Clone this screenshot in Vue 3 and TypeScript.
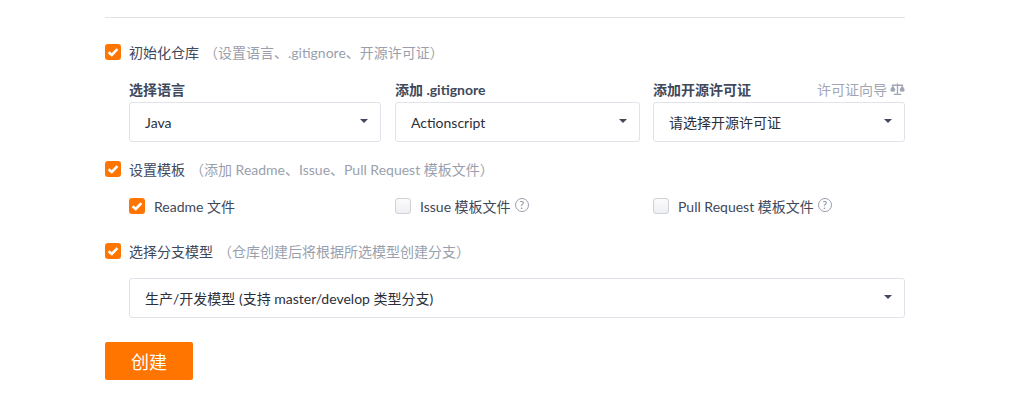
<template>
  <div class="page">
    <hr class="divider" />

    <div class="check-row first">
      <span class="box on"><svg viewBox="0 0 16 16"><path d="M3.6 8.2 6.8 11 12.4 5.2" /></svg></span>
      <span class="title">初始化仓库</span>
      <span class="hint">（设置语言、.gitignore、开源许可证）</span>
    </div>

    <div class="fields">
      <div v-for="f in fields" :key="f.label" class="field" :class="f.cls">
        <div class="field-head">
          <label>{{ f.label }}</label>
          <span v-if="f.wizard" class="wizard">
            许可证向导
            <svg class="scale" viewBox="0 0 16 14">
              <path d="M8 1v11M4 12.800h8M2 3h12" />
              <path class="fill" d="M0.500 7 3 3.200 5.500 7v1.500a2.500 1.500 0 0 1-5 0ZM10.500 7 13 3.200 15.500 7v1.500a2.500 1.500 0 0 1-5 0Z" />
            </svg>
          </span>
        </div>
        <div class="select">{{ f.value }}<i class="caret"></i></div>
      </div>
    </div>

    <div class="check-row second">
      <span class="box on"><svg viewBox="0 0 16 16"><path d="M3.6 8.2 6.8 11 12.4 5.2" /></svg></span>
      <span class="title">设置模板</span>
      <span class="hint">（添加 Readme、Issue、Pull Request 模板文件）</span>
    </div>

    <div class="templates">
      <div v-for="t in templates" :key="t.label" class="tpl" :class="t.cls">
        <span class="box" :class="{ on: t.checked }">
          <svg v-if="t.checked" viewBox="0 0 16 16"><path d="M3.6 8.2 6.8 11 12.4 5.2" /></svg>
        </span>
        <span class="tpl-label">{{ t.label }}</span>
        <span v-if="t.help" class="help">?</span>
      </div>
    </div>

    <div class="check-row third">
      <span class="box on"><svg viewBox="0 0 16 16"><path d="M3.6 8.2 6.8 11 12.4 5.2" /></svg></span>
      <span class="title">选择分支模型</span>
      <span class="hint">（仓库创建后将根据所选模型创建分支）</span>
    </div>

    <div class="select wide">生产/开发模型 (支持 master/develop 类型分支)<i class="caret"></i></div>

    <button class="create">创建</button>
  </div>
</template>

<script setup lang="ts">
const fields = [
  { label: "选择语言", value: "Java", cls: "w-a", wizard: false },
  { label: "添加 .gitignore", value: "Actionscript", cls: "w-b", wizard: false },
  { label: "添加开源许可证", value: "请选择开源许可证", cls: "w-a", wizard: true },
];

const templates = [
  { label: "Readme 文件", checked: true, help: false, cls: "t-a" },
  { label: "Issue 模板文件", checked: false, help: true, cls: "t-b" },
  { label: "Pull Request 模板文件", checked: false, help: true, cls: "t-c" },
];
</script>

<style>
html,
body {
  margin: 0;
  background: #fff;
}
</style>

<style scoped>
.page {
  width: 800px;
  height: 407px;
  margin-left: 105px;
  padding-top: 17px;
  box-sizing: border-box;
  overflow: hidden;
  font-family: "Lato", "Noto Sans CJK SC", sans-serif;
  font-size: 14px;
  color: #40485b;
}

.divider {
  height: 1px;
  margin: 0;
  border: 0;
  background: #e3e3e5;
}

.check-row {
  display: flex;
  align-items: center;
  height: 18px;
}

.first {
  margin-top: 25px;
}

.second {
  margin-top: 18px;
}

.third {
  margin-top: 27px;
}

.box {
  flex: none;
  width: 16px;
  height: 16px;
  box-sizing: border-box;
  border: 1px solid #cfd0d8;
  border-radius: 3px;
  background: linear-gradient(#fbfbfc, #eeeff3);
}

.box.on {
  border: 0;
  background: #ff7500;
}

.box svg {
  display: block;
  width: 16px;
  height: 16px;
}

.box path {
  fill: none;
  stroke: #fff;
  stroke-width: 2.6;
}

.title {
  margin-left: 8px;
}

.hint {
  margin-left: 5px;
  color: #9a9fae;
}

.fields {
  display: flex;
  justify-content: space-between;
  margin-top: 19px;
  margin-left: 24px;
}

.w-a {
  width: 252px;
}

.w-b {
  width: 245px;
  margin-left: 1px;
}

.field-head {
  display: flex;
  justify-content: space-between;
  align-items: center;
  height: 18px;
  margin-bottom: 4px;
}

.field-head label {
  font-weight: 700;
}

.wizard {
  display: flex;
  align-items: center;
  gap: 3px;
  color: #a2a6b4;
}

.scale {
  width: 15px;
  height: 14px;
}

.scale path {
  fill: none;
  stroke: #a2a6b4;
  stroke-width: 1.4;
}

.scale .fill {
  fill: #a2a6b4;
  stroke: none;
}

.select {
  position: relative;
  height: 40px;
  line-height: 40px;
  box-sizing: border-box;
  padding-left: 15px;
  border: 1px solid #e2e2ea;
  border-radius: 3px;
  color: #2b2f3a;
  background: #fff;
}

.caret {
  position: absolute;
  top: 16px;
  right: 12px;
  width: 0;
  height: 0;
  border-style: solid;
  border-width: 4px 4px 0;
  border-color: #40485b transparent transparent;
}

.wide {
  margin-top: 18px;
  margin-left: 24px;
}

.templates {
  display: flex;
  margin-top: 19px;
  margin-left: 24px;
  height: 18px;
  align-items: center;
}

.tpl {
  display: flex;
  align-items: center;
}

.t-a {
  width: 266px;
}

.t-b {
  width: 258px;
}

.tpl-label {
  margin-left: 9px;
}

.help {
  width: 12px;
  height: 12px;
  margin: -3px 0 0 4px;
  border: 1px solid #9a9fae;
  border-radius: 50%;
  color: #8a90a0;
  font-size: 11px;
  line-height: 12px;
  text-align: center;
}

.create {
  display: block;
  width: 88px;
  height: 38px;
  margin-top: 24px;
  padding: 0;
  border: 0;
  border-radius: 2px;
  background: #ff7500;
  color: #fff;
  font-family: inherit;
  font-size: 18px;
}
</style>
